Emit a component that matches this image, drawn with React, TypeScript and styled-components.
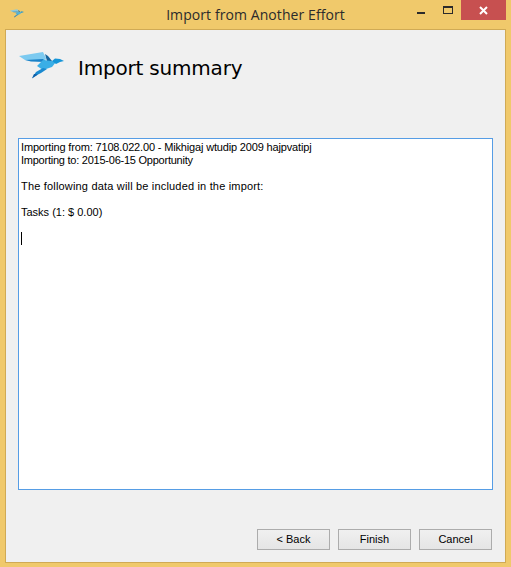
import React from "react";
import styled, {createGlobalStyle} from "styled-components";

const GlobalStyle = createGlobalStyle`
  html, body {
    margin: 0;
    padding: 0;
    background: #f0c96b;
  }
`;

const Window = styled.div`
  width: 511px;
  height: 567px;
  box-sizing: border-box;
  padding: 0 5px 4px 5px;
  background: #f0c96b;
  display: flex;
  flex-direction: column;
  font-family: "Liberation Sans", Arial, sans-serif;
`;

const TitleBar = styled.div`
  height: 29px;
  flex: none;
  display: flex;
  align-items: flex-start;
  position: relative;
`;

const TitleIcon = styled.svg`
  width: 14px;
  height: 9px;
  margin: 9px 0 0 5px;
  opacity: 0.85;
`;

const Title = styled.div`
  position: absolute;
  left: 0;
  right: 0;
  top: 6px;
  text-align: center;
  font-family: "Open Sans", sans-serif;
  font-size: 14px;
  letter-spacing: 0.08px;
  line-height: 17px;
  color: #2b2b2b;
`;

const WindowControls = styled.div`
  margin-left: auto;
  display: flex;
  align-items: flex-start;
`;

const ControlButton = styled.div<{wide?: boolean; danger?: boolean}>`
  width: ${({wide}) => (wide ? "45px" : "26px")};
  height: 20px;
  display: flex;
  align-items: center;
  justify-content: center;
  background: ${({danger}) => (danger ? "#c75050" : "transparent")};
`;

const MinimizeGlyph = styled.div`
  width: 8px;
  height: 2px;
  margin: 6px 2px 0 0;
  background: #2b2b2b;
`;

const MaximizeGlyph = styled.div`
  width: 8px;
  height: 5px;
  box-sizing: content-box;
  border: 1px solid #2b2b2b;
  border-top-width: 2px;
`;

const Client = styled.div`
  flex: 1;
  min-height: 0;
  box-sizing: border-box;
  background: #f0f0f0;
  border: 1px solid #d0aa55;
  display: flex;
  flex-direction: column;
  padding: 0 12px 12px 12px;
`;

const Header = styled.div`
  height: 108px;
  flex: none;
  display: flex;
  align-items: flex-start;
`;

const HeaderBird = styled.svg`
  width: 45px;
  height: 27px;
  margin: 22px 0 0 1px;
  flex: none;
`;

const Heading = styled.h1`
  margin: 24px 0 0 14px;
  font-family: "DejaVu Sans", Verdana, sans-serif;
  font-size: 20px;
  font-weight: 400;
  letter-spacing: -0.2px;
  line-height: 29px;
  color: #000;
`;

const SummaryBox = styled.div`
  height: 352px;
  flex: none;
  box-sizing: border-box;
  border: 1px solid #569de5;
  background: #fff;
  padding: 2px 2px;
  font-size: 11px;
  line-height: 13px;
  color: #000;
`;

const SummaryLine = styled.div<{tracking?: number}>`
  min-height: 13px;
  white-space: nowrap;
  letter-spacing: ${({tracking}) => tracking ?? 0}px;
`;

const Caret = styled.div`
  width: 1px;
  height: 13px;
  background: #000;
`;

const ButtonRow = styled.div`
  margin-top: auto;
  display: flex;
  justify-content: flex-end;
  gap: 8px;
  padding-right: 1px;
`;

const WizardButton = styled.button`
  width: 73px;
  height: 21px;
  padding: 0 0 1px 0;
  box-sizing: border-box;
  border: 1px solid #acacac;
  background: linear-gradient(#f0f0f0, #e5e5e5);
  font-family: "Liberation Sans", Arial, sans-serif;
  font-size: 11px;
  color: #000;
`;

const Bird = () => (
  <>
    <polygon points="0,4 24,0 27,6 26,10 6,8" fill="#7ccaf0"/>
    <polygon points="6,8 24,7 27,10 12,9.5" fill="#1a82c8"/>
    <polygon points="26,2 29,4 33,9 28,9" fill="#14659f"/>
    <polygon points="24,8 33,9 37,10 33,15 24,18 18,14" fill="#3aaee6"/>
    <polygon points="33,9 36,6.5 41,7 45,9 41,10 37,12" fill="#1595d8"/>
    <polygon points="13,26 17,20 24,16 28,17 22,21 18,23" fill="#1a8ad0"/>
    <polygon points="13,26.5 15,22 19,22.5" fill="#0e5fa8"/>
  </>
);

export default function App() {
  return (
    <Window>
      <GlobalStyle/>
      <TitleBar>
        <TitleIcon viewBox="0 0 45 27"><Bird/></TitleIcon>
        <Title>Import from Another Effort</Title>
        <WindowControls>
          <ControlButton><MinimizeGlyph/></ControlButton>
          <ControlButton><MaximizeGlyph/></ControlButton>
          <ControlButton wide danger>
            <svg width="9" height="9" viewBox="0 0 9 9">
              <path d="M1 1 L8 8 M8 1 L1 8" stroke="#fff" strokeWidth="2"/>
            </svg>
          </ControlButton>
        </WindowControls>
      </TitleBar>
      <Client>
        <Header>
          <HeaderBird viewBox="0 0 45 27"><Bird/></HeaderBird>
          <Heading>Import summary</Heading>
        </Header>
        <SummaryBox>
          <SummaryLine tracking={-0.16}>Importing from: 7108.022.00 - Mikhigaj wtudip 2009 hajpvatipj</SummaryLine>
          <SummaryLine tracking={-0.24}>Importing to: 2015-06-15 Opportunity</SummaryLine>
          <SummaryLine/>
          <SummaryLine tracking={0.18}>The following data will be included in the import:</SummaryLine>
          <SummaryLine/>
          <SummaryLine>Tasks (1: $ 0.00)</SummaryLine>
          <SummaryLine/>
          <Caret/>
        </SummaryBox>
        <ButtonRow>
          <WizardButton>&lt; Back</WizardButton>
          <WizardButton>Finish</WizardButton>
          <WizardButton>Cancel</WizardButton>
        </ButtonRow>
      </Client>
    </Window>
  );
}
